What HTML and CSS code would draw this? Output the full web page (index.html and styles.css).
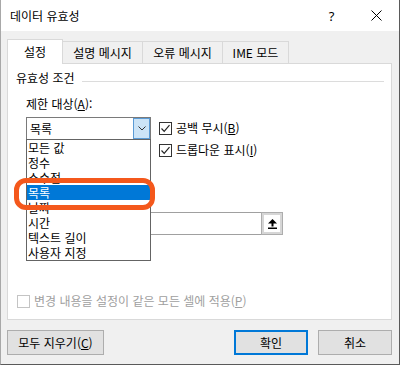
FILE: index.html
```html
<!DOCTYPE html>
<html lang="ko">
<head>
<meta charset="utf-8">
<title>데이터 유효성</title>
<link rel="stylesheet" href="styles.css">
</head>
<body>
<div class="window">
  <div class="titlebar">
    <span class="title">데이터 유효성</span>
    <span class="cap help">?</span>
    <span class="cap close"><svg width="11" height="11" viewBox="0 0 11 11"><path d="M0.5 0.5 L10.5 10.5 M10.5 0.5 L0.5 10.5" stroke="#000" stroke-width="1" fill="none"/></svg></span>
  </div>
  <div class="tabs">
    <div class="tab active">설정</div>
    <div class="tab t2">설명 메시지</div>
    <div class="tab t3">오류 메시지</div>
    <div class="tab t4">IME 모드</div>
  </div>
  <div class="panel">
    <div class="group-head"><span>유효성 조건</span><span class="rule"></span></div>
    <div class="field-label">제한 대상(<u>A</u>):</div>
    <div class="allow-row">
      <div class="combo">
        <span class="combo-value">목록</span>
        <span class="combo-btn"><svg width="8" height="5" viewBox="0 0 8 5"><polyline points="0.5,0.5 4,4 7.5,0.5" stroke="#333" stroke-width="1" fill="none"/></svg></span>
      </div>
      <div class="checks">
        <div class="check"><span class="box"><svg width="11" height="11" viewBox="0 0 11 11"><polyline points="1.5,5.5 4.2,8.3 9.5,2.2" stroke="#222" stroke-width="1.2" fill="none"/></svg></span>공백 무시(<u>B</u>)</div>
        <div class="check"><span class="box"><svg width="11" height="11" viewBox="0 0 11 11"><polyline points="1.5,5.5 4.2,8.3 9.5,2.2" stroke="#222" stroke-width="1.2" fill="none"/></svg></span>드롭다운 표시(<u>I</u>)</div>
      </div>
    </div>
    <div class="source-row">
      <div class="textbox"></div>
      <div class="ref-btn"><span class="ref-icon"><svg width="9" height="10" viewBox="0 0 9 10"><polygon points="0,4.5 4.5,0 9,4.5" fill="#000"/><rect x="3.5" y="4" width="2" height="3.5" fill="#000"/><rect x="0" y="8.5" width="9" height="1.5" fill="#000"/></svg></span></div>
    </div>
    <div class="check apply"><span class="box"></span>변경 내용을 설정이 같은 모든 셀에 적용(<u>P</u>)</div>
    <ul class="dropdown">
      <li>모든 값</li>
      <li>정수</li>
      <li>소수점</li>
      <li class="selected">목록</li>
      <li>날짜</li>
      <li>시간</li>
      <li>텍스트 길이</li>
      <li>사용자 지정</li>
    </ul>
    <div class="callout"></div>
  </div>
  <div class="buttons">
    <button class="btn clear">모두 지우기(<u>C</u>)</button>
    <button class="btn ok">확인</button>
    <button class="btn cancel">취소</button>
  </div>
</div>
</body>
</html>
```
FILE: styles.css
```css
* { box-sizing: border-box; }
body {
  margin: 0;
  font-family: "Noto Sans CJK KR", "Noto Sans", sans-serif;
  font-size: 12px;
  line-height: 16px;
  color: #000;
}
.window {
  width: 400px;
  height: 365px;
  background: #f0f0f0;
  border-left: 1px solid #a8a8a8;
  border-right: 1px solid #5a5a5a;
  border-bottom: 1px solid #5a5a5a;
  display: flex;
  flex-direction: column;
  overflow: hidden;
}
.titlebar {
  flex: none;
  height: 31px;
  background: #fff;
  display: flex;
  align-items: center;
  padding-left: 9px;
}
.title { flex: 1; }
.cap {
  width: 45px;
  height: 31px;
  display: flex;
  align-items: center;
  justify-content: center;
}
.help { font-family: "Noto Sans", sans-serif; font-size: 13px; }

.tabs {
  flex: none;
  display: flex;
  align-items: flex-end;
  height: 24px;
  margin: 8px 0 0 6px;
  position: relative;
  z-index: 1;
}
.tab {
  height: 22px;
  border: 1px solid #d9d9d9;
  border-bottom: none;
  background: #f0f0f0;
  margin-left: -1px;
  display: flex;
  align-items: center;
  justify-content: center;
  white-space: nowrap;
}
.tab.active {
  margin-left: 0;
  width: 56px;
  height: 25px;
  margin-bottom: -1px;
  background: #fff;
  position: relative;
  z-index: 2;
}
.t2, .t3 { width: 81px; }
.t4 { width: 67px; }

.panel {
  flex: none;
  margin-left: 6px;
  width: 385px;
  height: 257px;
  background: #fff;
  border: 1px solid #d9d9d9;
  position: relative;
  display: flex;
  flex-direction: column;
  padding: 6px 0 10px 8px;
}
.group-head { display: flex; align-items: flex-start; }
.rule {
  flex: 1;
  height: 1px;
  background: #dcdcdc;
  margin: 11px 7px 0 7px;
}
.field-label { margin: 10px 0 0 10px; }
.allow-row { display: flex; margin: 5px 0 0 10px; }
.combo {
  width: 125px;
  height: 23px;
  border: 1px solid #7a7a7a;
  display: flex;
  align-items: center;
  background: #fff;
}
.combo-value { flex: 1; padding-left: 3px; }
.combo-btn {
  align-self: stretch;
  width: 17px;
  border: 1px solid #5b9bd5;
  background: #cce4f7;
  display: flex;
  align-items: center;
  justify-content: center;
}
.checks { margin-left: 8px; }
.check {
  display: flex;
  align-items: center;
  height: 22px;
  white-space: nowrap;
}
.box {
  width: 13px;
  height: 13px;
  border: 1px solid #333;
  background: #fff;
  margin-right: 4px;
  display: flex;
  align-items: center;
  justify-content: center;
}
.source-row { display: flex; margin: 51px 0 0 10px; }
.textbox {
  width: 236px;
  height: 23px;
  border: 1px solid #a0a0a0;
  background: #fff;
}
.ref-btn {
  width: 22px;
  height: 23px;
  margin-left: -1px;
  border: 1px solid #adadad;
  background: #d6d6d6;
  padding: 2px;
  display: flex;
}
.ref-icon {
  flex: 1;
  background: #fff;
  display: flex;
  align-items: center;
  justify-content: center;
}
.check.apply {
  margin-top: auto;
  margin-left: 1px;
  height: 16px;
  color: #a0a0a0;
}
.apply .box { border-color: #c4c4c4; }

.dropdown {
  position: absolute;
  left: 18px;
  top: 75px;
  width: 125px;
  margin: 0;
  padding: 0;
  list-style: none;
  border: 1px solid #646464;
  background: #fff;
}
.dropdown li {
  height: 15px;
  line-height: 15px;
  padding-left: 1px;
  white-space: nowrap;
}
.dropdown li.selected { background: #0078d7; color: #fff; }
.callout {
  position: absolute;
  left: 6px;
  top: 114px;
  width: 141px;
  height: 32px;
  border: 5px solid #f4581c;
  border-radius: 12px;
}

.buttons {
  flex: none;
  display: flex;
  margin: 10px 7px 0 6px;
}
.btn {
  height: 25px;
  border: 1px solid #adadad;
  background: #e1e1e1;
  font: inherit;
  color: #000;
  padding: 0;
}
.clear { width: 97px; }
.ok { width: 74px; margin-left: auto; border: 2px solid #0078d7; }
.cancel { width: 74px; margin-left: 10px; }
```
